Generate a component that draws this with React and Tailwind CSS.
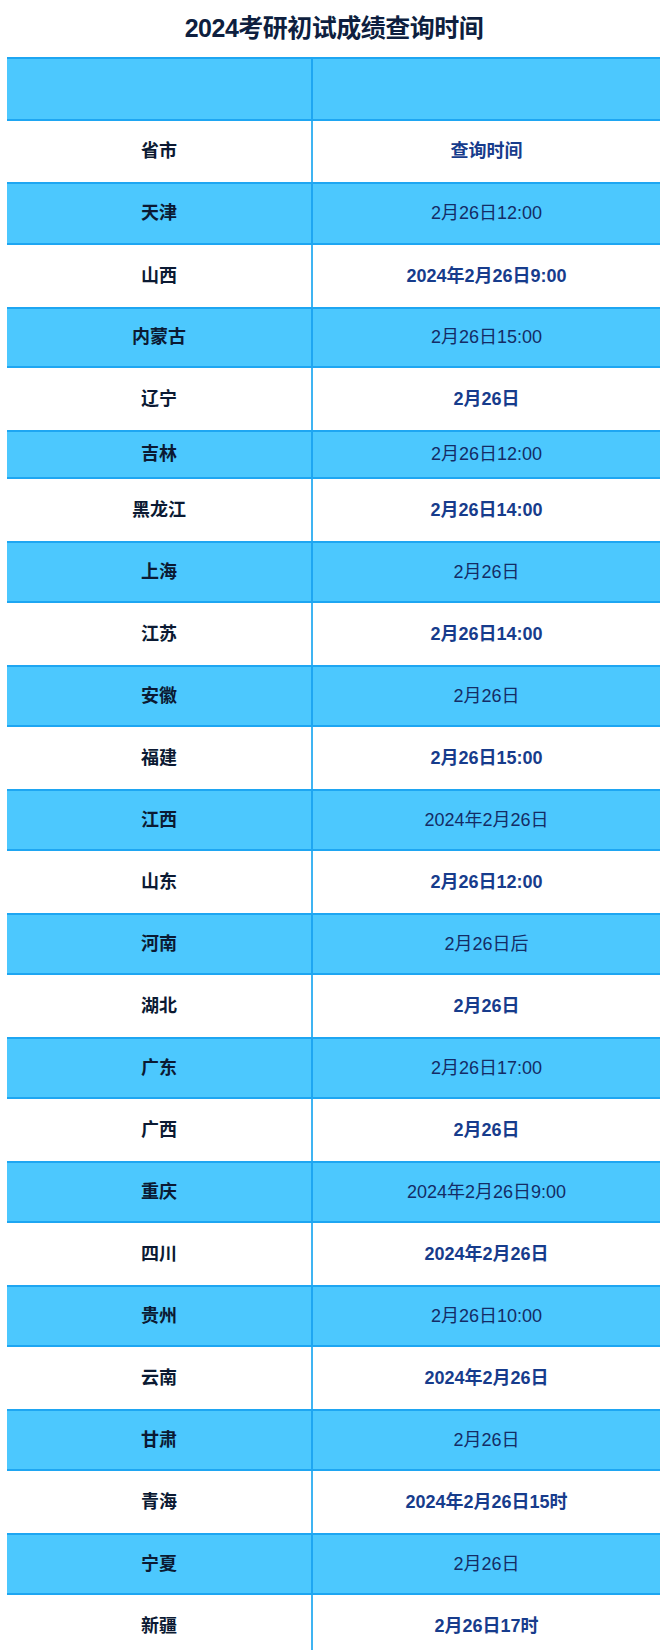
import React from "react";

const rows = [
  ["天津", "2月26日12:00"],
  ["山西", "2024年2月26日9:00"],
  ["内蒙古", "2月26日15:00"],
  ["辽宁", "2月26日"],
  ["吉林", "2月26日12:00"],
  ["黑龙江", "2月26日14:00"],
  ["上海", "2月26日"],
  ["江苏", "2月26日14:00"],
  ["安徽", "2月26日"],
  ["福建", "2月26日15:00"],
  ["江西", "2024年2月26日"],
  ["山东", "2月26日12:00"],
  ["河南", "2月26日后"],
  ["湖北", "2月26日"],
  ["广东", "2月26日17:00"],
  ["广西", "2月26日"],
  ["重庆", "2024年2月26日9:00"],
  ["四川", "2024年2月26日"],
  ["贵州", "2月26日10:00"],
  ["云南", "2024年2月26日"],
  ["甘肃", "2月26日"],
  ["青海", "2024年2月26日15时"],
  ["宁夏", "2月26日"],
  ["新疆", "2月26日17时"],
];

// a few rows in the source are not the standard height
const heights = {
  天津: "h-[63px]",
  内蒙古: "h-[61px]",
  吉林: "h-[49px]",
};

const Row = ({ blue, height, left, right }) => (
  <div
    className={`flex ${height} ${
      blue ? "bg-[#4cc8fe] border-y-2 border-[#1ea6f2]" : "bg-white"
    }`}
  >
    <div
      className={`w-[306px] shrink-0 flex items-center justify-center border-r-2 text-[18px] font-bold text-[#0b1a33] ${
        blue ? "border-[#1ea6f2]" : "border-[#3fb4f2]"
      }`}
    >
      {left}
    </div>
    <div
      className={`flex-1 flex items-center justify-center text-[18px] ${
        blue ? "font-normal text-[#142c66]" : "font-bold text-[#173c8c]"
      }`}
    >
      {right}
    </div>
  </div>
);

export default function App() {
  return (
    <div
      className="w-[660px] h-[1650px] overflow-hidden bg-white"
      style={{ fontFamily: '"Liberation Sans", "Noto Sans CJK SC", sans-serif' }}
    >
      <div className="h-[57px] flex items-center justify-center pl-2">
        <h1 className="text-[25px] font-bold text-[#0e1f3f] tracking-[-0.5px]">
          2024考研初试成绩查询时间
        </h1>
      </div>

      <div className="pl-[7px]">
        <Row blue height="h-[64px]" left="" right="" />
        <Row height="h-[61px]" left="省市" right="查询时间" />
        {rows.map(([city, time], i) => (
          <Row
            key={city}
            blue={i % 2 === 0}
            height={heights[city] || "h-[62px]"}
            left={city}
            right={time}
          />
        ))}
      </div>
    </div>
  );
}
